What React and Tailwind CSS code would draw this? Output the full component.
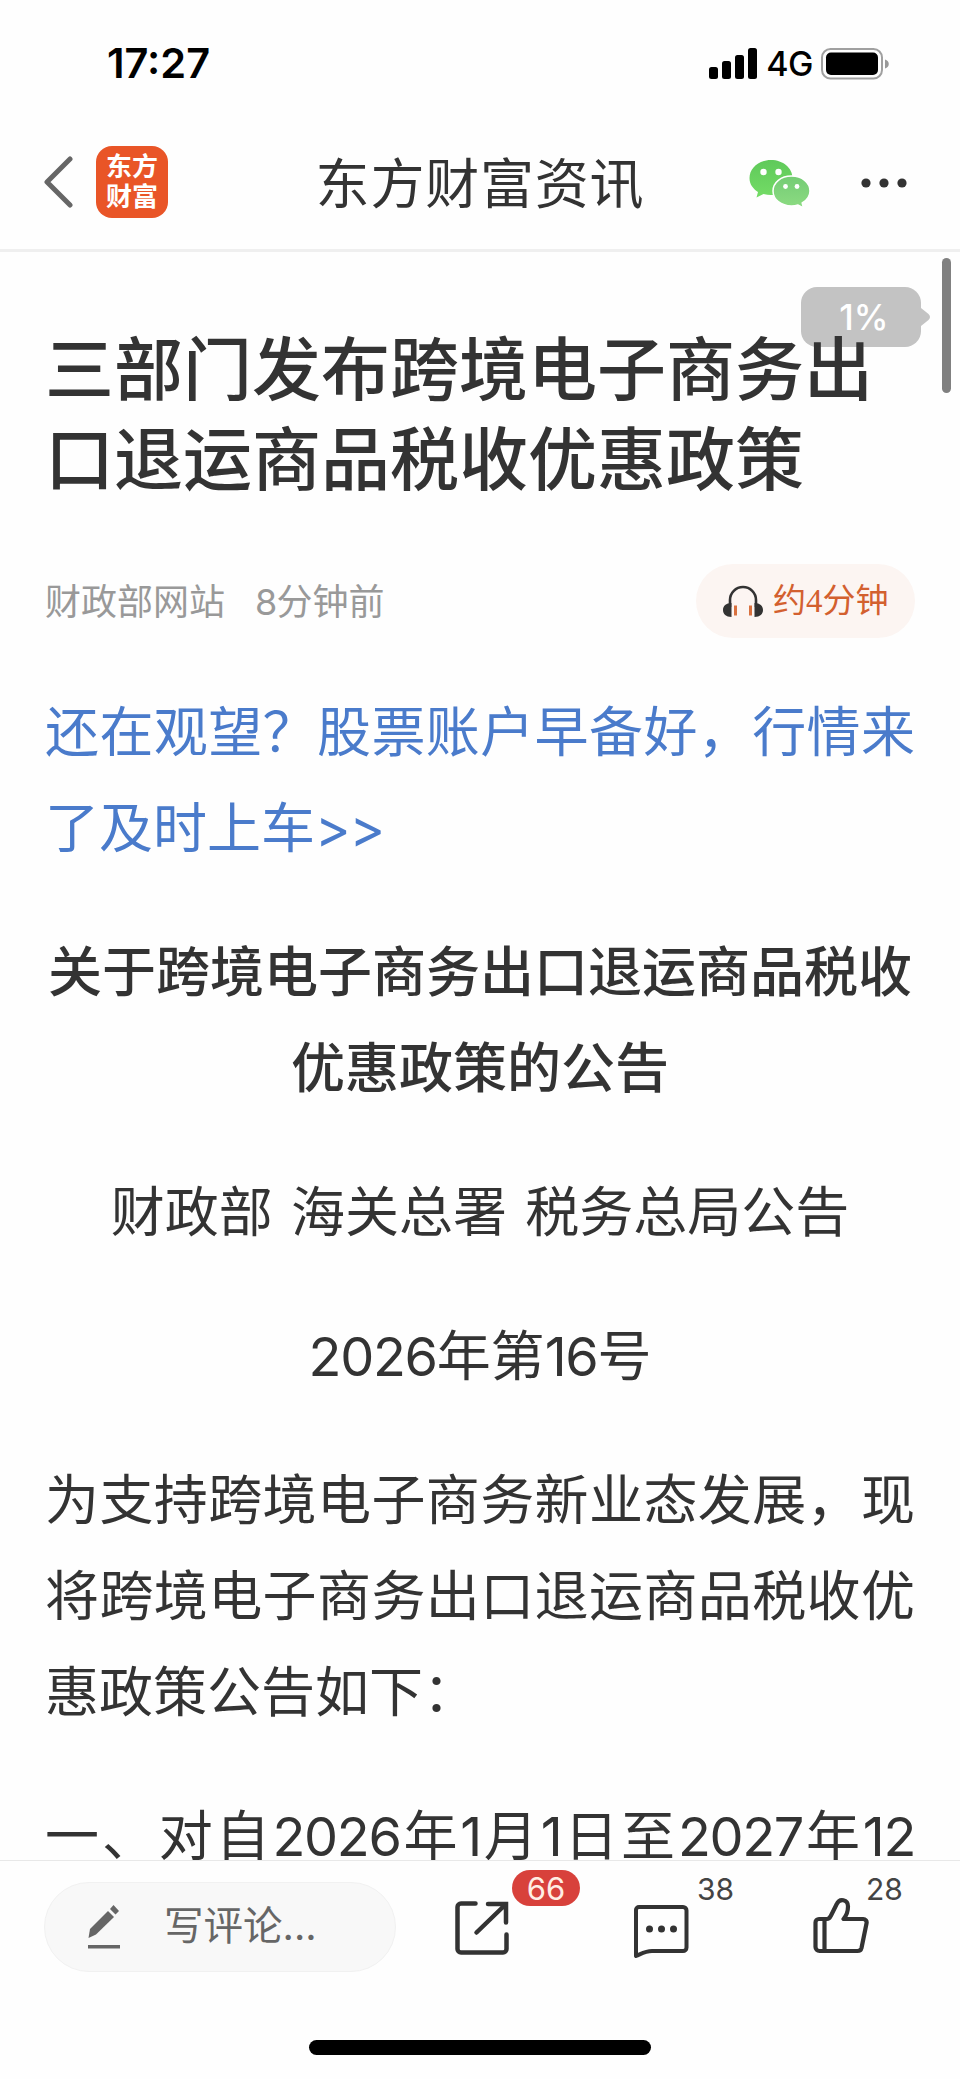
import React from 'react';

const article = {
  title: '三部门发布跨境电子商务出口退运商品税收优惠政策',
  source: '财政部网站',
  time: '8分钟前',
  promo: '还在观望？股票账户早备好，行情来了及时上车>>',
  heading: '关于跨境电子商务出口退运商品税收优惠政策的公告',
  issuer: '财政部 海关总署 税务总局公告',
  number: '2026年第16号',
  intro: '为支持跨境电子商务新业态发展，现将跨境电子商务出口退运商品税收优惠政策公告如下：',
  firstItem: '一、对自2026年1月1日至2027年12',
};

// Tightens runs of digits and latin signs inside Chinese text
function MixedText({ text }) {
  return text.split(/([0-9>]+)/).map((part, index) =>
    /^[0-9>]/.test(part) ? (
      <span key={index} className="tracking-[-0.025em]">{part}</span>
    ) : (
      part
    )
  );
}

function StatusBar() {
  return (
    <div className="flex h-32 shrink-0 items-center justify-between pl-[107px] pr-[70px] text-black">
      <span className="text-[41.5px] font-semibold leading-none">17:27</span>
      <div className="flex items-center">
        <svg className="h-8 w-[49px]" viewBox="0 0 49 32">
          <rect x="0" y="19" width="9" height="12" rx="2.5" />
          <rect x="13" y="13" width="9" height="18" rx="2.5" />
          <rect x="26" y="7" width="9" height="24" rx="2.5" />
          <rect x="39" y="0" width="9" height="31" rx="2.5" />
        </svg>
        <span className="ml-2 text-[34px] font-medium leading-none tracking-[-0.5px]">4G</span>
        <svg className="ml-2 h-8 w-[69px]" viewBox="0 0 69 32">
          <rect x="1" y="1" width="60" height="29.5" rx="8.5" fill="none" stroke="#a0a0a0" strokeWidth="2" />
          <rect x="5" y="4.5" width="52" height="22.5" rx="5" />
          <path d="M64 11.5c5 1.500 5 7.500 0 9z" fill="#999" />
        </svg>
      </div>
    </div>
  );
}

function WechatIcon() {
  return (
    <svg className="mt-[3px] h-[50px] w-[62px]" viewBox="0 0 62 50">
      <defs>
        <linearGradient id="wechatBack" x1="0" y1="0" x2="0" y2="1">
          <stop offset="0" stopColor="#5fc95a" />
          <stop offset="1" stopColor="#74dc66" />
        </linearGradient>
        <linearGradient id="wechatFront" x1="0" y1="0" x2="0" y2="1">
          <stop offset="0" stopColor="#74cc74" />
          <stop offset="1" stopColor="#8cdb82" />
        </linearGradient>
      </defs>
      <path d="M22 1C10 1 .5 9 .5 19c0 6 3.200 10.500 8.500 14L7.500 38.500l7-3.500c2.500.8 5 1.100 7.500 1.100 12 0 21.500-7.600 21.500-17.300S34 1 22 1z" fill="url(#wechatBack)" />
      <circle cx="14.500" cy="13" r="3.200" fill="#fff" />
      <circle cx="29.500" cy="13" r="3.200" fill="#fff" />
      <path d="M42.500 17C32 17 24 23.500 24 32s8 15 18.500 15c2.300 0 4.500-.3 6.500-1l5.500 3-1.300-5C58 41.200 61 37 61 32c0-8.500-8-15-18.500-15z" fill="url(#wechatFront)" stroke="#fff" strokeWidth="1.500" />
      <circle cx="36.500" cy="27.500" r="2.400" fill="#fff" />
      <circle cx="48" cy="27.500" r="2.400" fill="#fff" />
    </svg>
  );
}

function Header() {
  return (
    <header className="relative flex h-[124px] shrink-0 items-center border-b-[3px] border-[#efefef] pb-[13px] pl-11 pr-[53px]">
      <svg className="h-[52px] w-[29px]" viewBox="0 0 29 52" fill="none" stroke="#666" strokeWidth="5" strokeLinecap="round" strokeLinejoin="round">
        <path d="M26 3 3 26l23 23" />
      </svg>
      <div className="ml-[23px] flex h-[72px] w-[72px] flex-col items-center justify-center rounded-[16px] bg-[#e95527] text-[26px] font-bold leading-[30px] text-white">
        <span>东方</span>
        <span>财富</span>
      </div>
      <h1 className="absolute inset-x-0 mt-[5px] text-center text-[54px] leading-[80px] tracking-[0.8px] text-[#333]">东方财富资讯</h1>
      <div className="ml-auto flex items-center gap-[50px]">
        <WechatIcon />
        <svg className="mt-px h-[10px] w-[46px]" viewBox="0 0 46 10" fill="#333">
          <circle cx="5" cy="5" r="4.600" />
          <circle cx="23" cy="5" r="4.600" />
          <circle cx="41" cy="5" r="4.600" />
        </svg>
      </div>
    </header>
  );
}

function ReadProgress() {
  return (
    <>
      <div className="absolute left-[801px] top-[35px] flex h-[60px] w-[129px] items-center">
        <div className="flex h-[60px] w-[120px] items-center justify-center rounded-[16px] bg-[#c3c3c3] pl-1.5 text-[35px] font-medium text-white">
          1%
        </div>
        <svg className="h-5 w-[9px]" viewBox="0 0 9 20" fill="#c3c3c3">
          <path d="M0 1l7.500 6c2 2 2 4 0 6L0 19z" />
        </svg>
      </div>
      <div className="absolute right-[9px] top-[6px] h-[135px] w-[9px] rounded-full bg-[#808080]" />
    </>
  );
}

function ListenButton() {
  return (
    <button className="flex h-[74px] w-[219px] items-center rounded-full bg-[#fcf5f2] pl-[27px]">
      <svg className="h-[33px] w-10" viewBox="0 0 40 33">
        <path d="M7 22V15a13 13 0 0 1 26 0v7" fill="none" stroke="#333" strokeWidth="2.600" />
        <path d="M8.500 18v14C3 32 0 29 0 25s3-7 8.500-7zM31.500 18v14c5.500 0 8.500-3 8.500-7s-3-7-8.500-7z" fill="#333" />
        <path d="M12.500 20.500v10M27.500 20.500v10" stroke="#d9713f" strokeWidth="3" />
      </svg>
      <span className="ml-[10px] whitespace-nowrap font-['Liberation_Serif','Noto_Sans_CJK_SC',serif] text-[33px] leading-none text-[#d3602f]">
        约4分钟
      </span>
    </button>
  );
}

function Article() {
  return (
    <main className="relative min-h-0 flex-1 overflow-hidden px-[45px] pt-[73px] text-[#333]">
      <ReadProgress />
      <h2 className="relative text-[69px] font-medium leading-[90px]">{article.title}</h2>
      <div className="mt-[59px] flex h-[74px] items-center justify-between">
        <div className="flex gap-[30px] pt-0.5 text-[36px] leading-none text-[#999]">
          <span>{article.source}</span>
          <span><MixedText text={article.time} /></span>
        </div>
        <ListenButton />
      </div>
      <div className="mt-[47px] space-y-12 text-justify text-[54px] leading-[96px]">
        <p className="text-[#4a7bcb]"><MixedText text={article.promo} /></p>
        <p className="text-center font-medium">{article.heading}</p>
        <p className="text-center [word-spacing:3px]">{article.issuer}</p>
        <p className="text-center"><MixedText text={article.number} /></p>
        <p>{article.intro}</p>
        <p className="[text-align-last:justify]"><MixedText text={article.firstItem} /></p>
      </div>
    </main>
  );
}

function ShareIcon() {
  return (
    <svg className="h-[54px] w-[54px]" viewBox="0 0 54 54" fill="none" stroke="#333" strokeWidth="4.500" strokeLinecap="round">
      <path d="M20.500 2.500H6a3.500 3.500 0 0 0-3.500 3.500v42A3.500 3.500 0 0 0 6 51.500h42a3.500 3.500 0 0 0 3.500-3.500V33.500" />
      <path d="M33 3h18v18.500M50 4 21.500 31.500" />
    </svg>
  );
}

function CommentIcon() {
  return (
    <svg className="h-[54px] w-14" viewBox="0 0 56 54" fill="none" stroke="#333" strokeWidth="4" strokeLinejoin="round">
      <path d="M6 3h44a3.500 3.500 0 0 1 3.500 3.500v37A3.500 3.500 0 0 1 50 47H19c-7 0-11 3-16 5V6a3 3 0 0 1 3-3z" />
      <g fill="#333" stroke="none">
        <circle cx="16.500" cy="25" r="3.500" />
        <circle cx="28.500" cy="25" r="3.500" />
        <circle cx="40.500" cy="25" r="3.500" />
      </g>
    </svg>
  );
}

function LikeIcon() {
  return (
    <svg className="h-[58px] w-14" viewBox="0 0 56 58" fill="none" stroke="#333" strokeWidth="4.200" strokeLinejoin="round">
      <path d="M6 22h8c2 0 3-1.500 4-3.500l5.500-11c3-7 11.500-5 11.500 2 0 5-1.500 9-4.500 12.500H50a3.500 3.500 0 0 1 3.500 4.500l-5 24.500c-.5 2-2 3-4 3H6.500a4 4 0 0 1-4-4V25.500A3.500 3.500 0 0 1 6 22z" />
      <path d="M11.500 22v32" />
    </svg>
  );
}

function BottomBar() {
  return (
    <footer className="h-[219px] shrink-0 border-t border-[#e8e8e8] bg-[#fefefe]">
      <div className="flex h-[111px] items-start pl-11 pt-[21px]">
        <div className="flex h-[90px] w-[352px] items-center rounded-full border border-[#f1f1f1] bg-[#f8f8f8] pl-[43px] text-[#666]">
          <svg className="h-11 w-8" viewBox="0 0 32 44" fill="#666">
            <path d="M.5 33l1.500-9L20 6l6 6L8 29.500z" />
            <path d="M22 4l3.500-4 5.500 6-3.500 3.500zM0 40h32v3.500H0z" />
          </svg>
          <span className="ml-11 text-[39.5px] leading-none">写评论...</span>
        </div>
        <div className="relative ml-[59px] mt-[19px]">
          <ShareIcon />
          <span className="absolute -top-[31px] left-[57px] flex h-9 w-[68px] items-center justify-center rounded-full bg-[#d8413b] text-[31px] leading-none text-[#ffeee4]">66</span>
        </div>
        <div className="relative ml-[124px] mt-[22px]">
          <CommentIcon />
          <span className="absolute -top-[30px] left-[64px] text-[30px] leading-none text-[#444]">38</span>
        </div>
        <div className="relative ml-[124px] mt-[15px]">
          <LikeIcon />
          <span className="absolute -top-[23px] left-[53px] text-[30px] leading-none text-[#444]">28</span>
        </div>
      </div>
      <div className="mx-auto mt-[68px] h-[15px] w-[342px] rounded-full bg-black" />
    </footer>
  );
}

export default function App() {
  return (
    <div lang="zh-CN" className="flex h-[2079px] w-[960px] flex-col overflow-hidden bg-[#fefefe] font-['Inter','Noto_Sans_CJK_SC',sans-serif]">
      <StatusBar />
      <Header />
      <Article />
      <BottomBar />
    </div>
  );
}
